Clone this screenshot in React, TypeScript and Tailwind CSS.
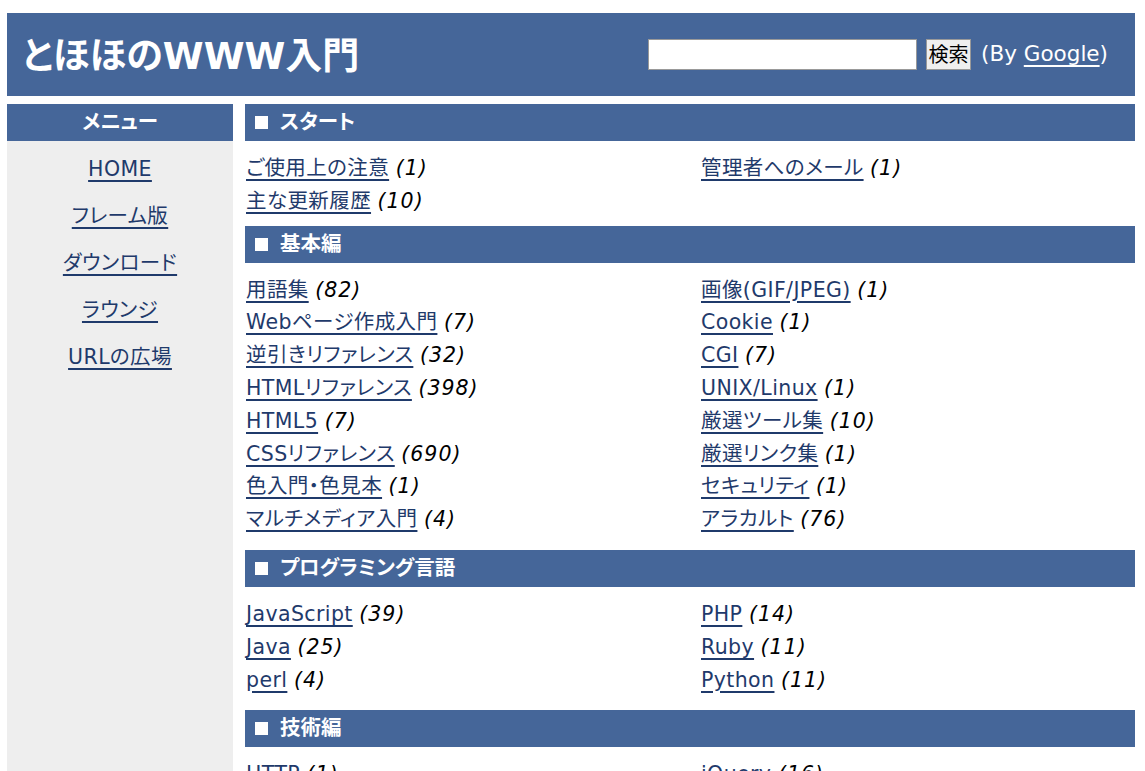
import React from 'react';

type Item = { label: string; count: number };
type Section = { title: string; left: Item[]; right: Item[]; tight?: boolean };

const sections: Section[] = [
  {
    title: 'スタート',
    tight: true,
    left: [
      { label: 'ご使用上の注意', count: 1 },
      { label: '主な更新履歴', count: 10 },
    ],
    right: [{ label: '管理者へのメール', count: 1 }],
  },
  {
    title: '基本編',
    left: [
      { label: '用語集', count: 82 },
      { label: 'Webページ作成入門', count: 7 },
      { label: '逆引きリファレンス', count: 32 },
      { label: 'HTMLリファレンス', count: 398 },
      { label: 'HTML5', count: 7 },
      { label: 'CSSリファレンス', count: 690 },
      { label: '色入門・色見本', count: 1 },
      { label: 'マルチメディア入門', count: 4 },
    ],
    right: [
      { label: '画像(GIF/JPEG)', count: 1 },
      { label: 'Cookie', count: 1 },
      { label: 'CGI', count: 7 },
      { label: 'UNIX/Linux', count: 1 },
      { label: '厳選ツール集', count: 10 },
      { label: '厳選リンク集', count: 1 },
      { label: 'セキュリティ', count: 1 },
      { label: 'アラカルト', count: 76 },
    ],
  },
  {
    title: 'プログラミング言語',
    left: [
      { label: 'JavaScript', count: 39 },
      { label: 'Java', count: 25 },
      { label: 'perl', count: 4 },
    ],
    right: [
      { label: 'PHP', count: 14 },
      { label: 'Ruby', count: 11 },
      { label: 'Python', count: 11 },
    ],
  },
  {
    title: '技術編',
    left: [
      { label: 'HTTP', count: 1 },
      { label: 'XML', count: 3 },
    ],
    right: [
      { label: 'jQuery', count: 16 },
      { label: 'Ajax', count: 1 },
    ],
  },
];

const menu = ['HOME', 'フレーム版', 'ダウンロード', 'ラウンジ', 'URLの広場'];

const font = {
  fontFamily: '"DejaVu Sans", "Noto Sans CJK JP", sans-serif',
  fontFeatureSettings: '"palt"',
};

const Entry: React.FC<{ item: Item }> = ({ item }) => (
  <div className="h-[32.8px] leading-[32.8px] whitespace-nowrap">
    <a href="#" className="text-[#1f3a6b] tracking-[0.4px] underline decoration-[2px] underline-offset-[4px]">
      {item.label}
    </a>{' '}
    <span className="italic text-black tracking-[1px]">({item.count})</span>
  </div>
);

const App: React.FC = () => {
  return (
    <div className="bg-white min-h-screen pl-[7px] pr-[10px] pt-[13px] text-[20.5px]" style={font}>
      <header className="h-[83px] bg-[#456699] flex items-center justify-between pl-[15px] pr-[27px]">
        <h1 className="text-[37px] font-bold text-white pt-[5px]">とほほのWWW入門</h1>
        <div className="flex items-center">
          <input type="text" className="w-[269px] h-[31px] bg-white border border-[#999999] outline-none" />
          <button className="ml-[9px] h-[31px] w-[45px] bg-[#efefef] border border-[#999999] text-black text-[20px] leading-none">
            検索
          </button>
          <span className="ml-[10px] text-white text-[21.5px]">
            (By <a href="#" className="underline underline-offset-[4px]">Google</a>)
          </span>
        </div>
      </header>

      <div className="flex gap-[12px] mt-[8px]">
        <aside className="w-[226px] shrink-0 bg-[#eeeeee]">
          <div className="h-[37px] bg-[#456699] text-white font-bold flex items-center justify-center">
            メニュー
          </div>
          <ul className="pt-[5px]">
            {menu.map((m) => (
              <li key={m} className="h-[47px] flex items-center justify-center">
                <a href="#" className="text-[#1f3a6b] tracking-[0.4px] underline decoration-[2px] underline-offset-[4px]">
                  {m}
                </a>
              </li>
            ))}
          </ul>
        </aside>

        <main className="flex-1 min-w-0">
          {sections.map((s) => (
            <section key={s.title} className={s.tight ? 'mb-[8px]' : 'mb-[14px]'}>
              <h2 className="h-[37px] bg-[#456699] text-white font-bold flex items-center pl-[10px]">
                <span className="w-[13px] h-[13px] bg-white mr-[12px]" />
                {s.title}
              </h2>
              <div className="grid grid-cols-[455px_1fr] pt-[11px] pl-[1px]">
                <div>
                  {s.left.map((it) => (
                    <Entry key={it.label} item={it} />
                  ))}
                </div>
                <div>
                  {s.right.map((it) => (
                    <Entry key={it.label} item={it} />
                  ))}
                </div>
              </div>
            </section>
          ))}
        </main>
      </div>
    </div>
  );
};

export default App;
